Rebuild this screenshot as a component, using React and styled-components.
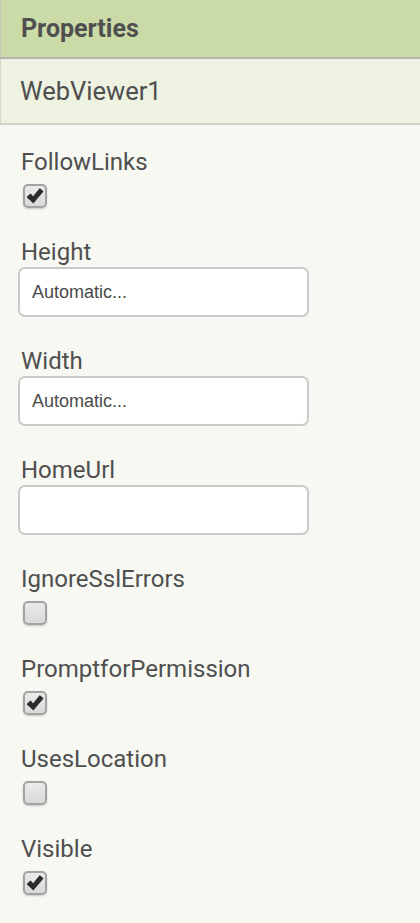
import styled, { createGlobalStyle } from "styled-components";

const GlobalStyle = createGlobalStyle`
  html, body {
    margin: 0;
    padding: 0;
    background: #f7f8f2;
  }
  body {
    font-family: Roboto, "Liberation Sans", sans-serif;
  }
`;

const properties = [
  { name: "FollowLinks", type: "check", checked: true },
  { name: "Height", type: "text", value: "Automatic..." },
  { name: "Width", type: "text", value: "Automatic..." },
  { name: "HomeUrl", type: "text", value: "" },
  { name: "IgnoreSslErrors", type: "check", checked: false },
  { name: "PromptforPermission", type: "check", checked: true },
  { name: "UsesLocation", type: "check", checked: false },
  { name: "Visible", type: "check", checked: true },
];

export default function App() {
  return (
    <Panel>
      <GlobalStyle />
      <Header>Properties</Header>
      <SubHeader>WebViewer1</SubHeader>
      <List>
        {properties.map((p) => (
          <Property key={p.name}>
            <Label>{p.name}</Label>
            {p.type === "check" ? (
              <CheckBox>
                {p.checked && (
                  <svg width="18" height="18" viewBox="0 0 16 16">
                    <path
                      d="M1.2 9 L4 6.4 L6.3 8.9 L12.3 1.6 L15 4 L6.5 14 Z"
                      fill="#2b2b2b"
                      stroke="#2b2b2b"
                      strokeWidth="0.9"
                      strokeLinejoin="round"
                    />
                  </svg>
                )}
              </CheckBox>
            ) : (
              <TextBox>{p.value}</TextBox>
            )}
          </Property>
        ))}
      </List>
    </Panel>
  );
}

const Panel = styled.div`
  width: 420px;
  min-height: 923px;
  background: #f7f8f2;
`;

const Header = styled.div`
  height: 57px;
  display: flex;
  align-items: center;
  padding-left: 20px;
  background: #cbdba8;
  border-left: 1px solid #c4c9bc;
  border-bottom: 2px solid #b3b5ae;
  font-size: 25px;
  font-weight: 700;
  color: #4f4f4f;
`;

const SubHeader = styled.div`
  height: 64px;
  display: flex;
  align-items: center;
  padding-left: 19px;
  background: #eef2e1;
  border-left: 1px solid #d6d9cf;
  border-bottom: 2px solid #d0d0cc;
  font-size: 25.5px;
  color: #4f4f4f;
`;

const List = styled.div`
  display: flex;
  flex-direction: column;
  padding: 23px 18px 0;
`;

const Property = styled.div`
  display: flex;
  flex-direction: column;
  align-items: flex-start;
  margin-bottom: 30px;
`;

const Label = styled.div`
  padding-left: 3px;
  font-size: 24px;
  line-height: 28px;
  color: #4f4f4f;
`;

const CheckBox = styled.div`
  box-sizing: border-box;
  width: 24px;
  height: 24px;
  margin: 8px 0 0 5px;
  display: flex;
  align-items: center;
  justify-content: center;
  border: 2px solid #a3a3a3;
  border-radius: 5px;
  background: linear-gradient(#ebebeb, #d9d9d9);
  box-shadow: 0 1px 2px rgba(0, 0, 0, 0.2);
`;

const TextBox = styled.div`
  box-sizing: border-box;
  width: 291px;
  height: 50px;
  margin-top: 1px;
  display: flex;
  align-items: center;
  padding-left: 12px;
  background: #ffffff;
  border: 2px solid #cacaca;
  border-radius: 7px;
  font-family: "Liberation Sans", Arial, sans-serif;
  font-size: 18px;
  color: #4a4a4a;
`;
